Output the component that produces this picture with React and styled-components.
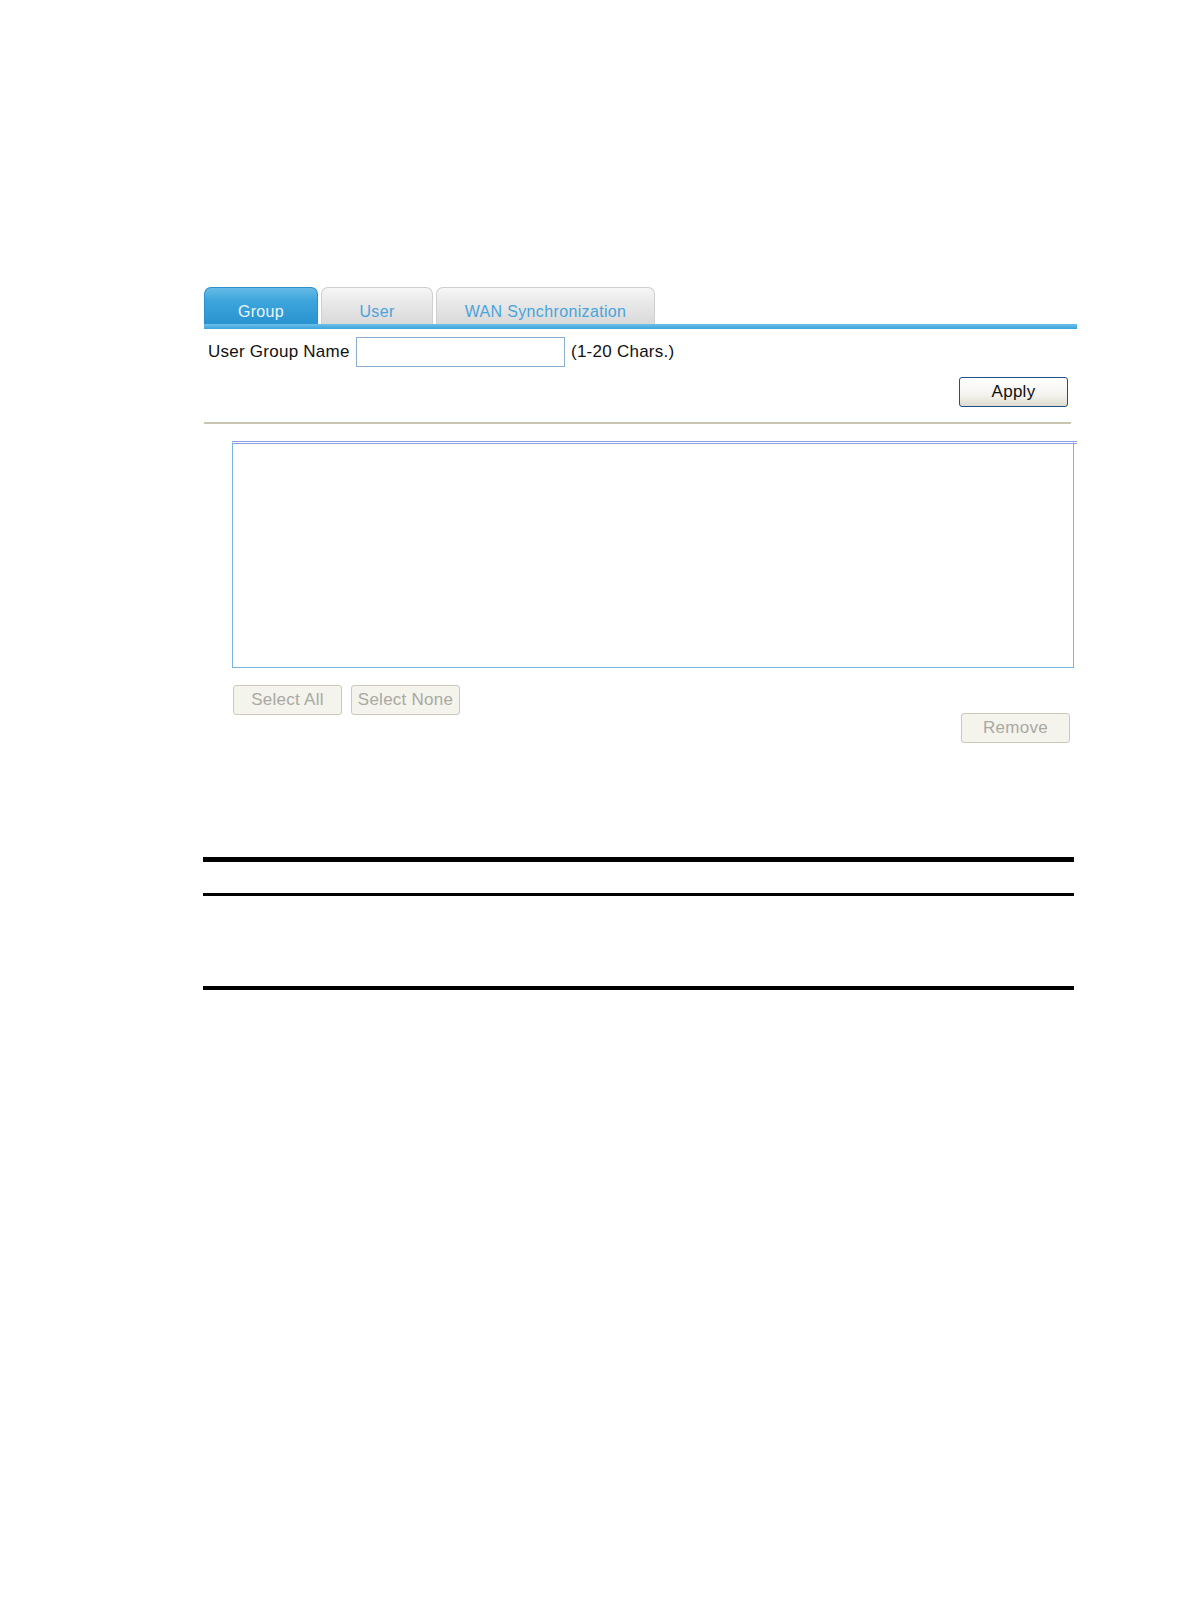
import React from 'react'
import styled, { createGlobalStyle } from 'styled-components'

const GlobalStyle = createGlobalStyle`
  html, body {
    margin: 0;
    padding: 0;
    background: #ffffff;
  }
  body {
    font-family: "Liberation Sans", Arial, sans-serif;
  }
`

const tabs = [
  { label: 'Group', width: 114, active: true },
  { label: 'User', width: 112 },
  { label: 'WAN Synchronization', width: 219 },
]

function App() {
  return (
    <Page>
      <GlobalStyle />
      <Panel>
        <TabBar>
          {tabs.map((t) => (
            <Tab key={t.label} $active={t.active} $width={t.width}>
              {t.label}
            </Tab>
          ))}
        </TabBar>
        <TabLine />

        <FormRow>
          <Label>User Group Name</Label>
          <TextInput type="text" />
          <Hint>(1-20 Chars.)</Hint>
        </FormRow>

        <ApplyRow>
          <Button>Apply</Button>
        </ApplyRow>

        <Divider />

        <ListArea>
          <ListBox />
          <ListActions>
            <Button disabled>Select All</Button>
            <Button disabled>Select None</Button>
          </ListActions>
          <RemoveRow>
            <Button disabled>Remove</Button>
          </RemoveRow>
        </ListArea>
      </Panel>

      <NoteTable>
        <Rule $size={5} />
        <HeadGap />
        <Rule $size={3} />
        <BodyGap />
        <Rule $size={4} />
      </NoteTable>
    </Page>
  )
}

export default App

const Page = styled.div`
  padding: 287px 0 0 204px;
  min-height: 1616px;
  box-sizing: border-box;
  width: 1190px;
`

const Panel = styled.div`
  width: 873px;
`

const TabBar = styled.div`
  display: flex;
  gap: 3px;
  height: 37px;
  align-items: flex-end;
`

const Tab = styled.div`
  width: ${(p) => p.$width}px;
  height: 37px;
  box-sizing: border-box;
  border-radius: 7px 7px 0 0;
  display: flex;
  align-items: center;
  justify-content: center;
  padding-top: 11px;
  font-size: 16px;
  letter-spacing: 0.35px;
  color: ${(p) => (p.$active ? '#eaf6fd' : '#4aa3dc')};
  background: ${(p) =>
    p.$active
      ? 'linear-gradient(#66bbe6 0%, #3ea5dc 35%, #2893d0 100%)'
      : 'linear-gradient(#f6f6f6 0%, #e9e9e9 40%, #d9d9d9 100%)'};
  border: 1px solid ${(p) => (p.$active ? '#2a8fca' : '#cfcfcf')};
  border-bottom: none;
`

const TabLine = styled.div`
  height: 5px;
  background: linear-gradient(#6ec0ea, #39a2db);
`

const FormRow = styled.div`
  display: flex;
  align-items: center;
  margin-top: 8px;
  padding-left: 4px;
  height: 30px;
`

const Label = styled.span`
  font-size: 17px;
  letter-spacing: 0.25px;
  color: #111;
  width: 148px;
`

const TextInput = styled.input`
  width: 209px;
  height: 30px;
  box-sizing: border-box;
  border: 1px solid #8cb0cf;
  margin: 0 6px 0 0;
  padding: 0 4px;
  outline: none;
`

const Hint = styled.span`
  font-size: 17px;
  letter-spacing: 0.25px;
  color: #111;
`

const ApplyRow = styled.div`
  display: flex;
  justify-content: flex-end;
  padding-right: 9px;
  margin-top: 10px;
`

const Button = styled.button`
  width: 109px;
  height: 30px;
  box-sizing: border-box;
  font-family: "Liberation Sans", Arial, sans-serif;
  font-size: 17px;
  letter-spacing: 0.25px;
  padding: 0;
  border-radius: 3px;
  color: #111;
  border: 1px solid #1f4f84;
  background: linear-gradient(#ffffff 0%, #f4f3ee 60%, #dedcd0 100%);
  cursor: pointer;

  &:disabled {
    color: #a9a9a3;
    border-color: #ccc9bc;
    background: #f4f3ec;
    cursor: default;
  }
`

const Divider = styled.div`
  margin-top: 15px;
  width: 867px;
  height: 2px;
  background: #c8c6b3;
`

const ListArea = styled.div`
  padding-left: 28px;
  margin-top: 17px;
`

const ListBox = styled.div`
  width: 842px;
  height: 227px;
  box-sizing: border-box;
  border: 1px solid #74b6e0;
  border-top: 3px double #8d9ee2;
  position: relative;

  &::after {
    content: '';
    position: absolute;
    top: -3px;
    right: -4px;
    width: 4px;
    height: 3px;
    border-top: 3px double #8d9ee2;
    box-sizing: border-box;
  }
`

const ListActions = styled.div`
  display: flex;
  gap: 9px;
  margin-top: 17px;
  padding-left: 1px;
`

const RemoveRow = styled.div`
  display: flex;
  justify-content: flex-end;
  padding-right: 7px;
  margin-top: -2px;
`

const NoteTable = styled.div`
  margin-top: 114px;
  width: 871px;
  margin-left: -1px;
`

const Rule = styled.div`
  height: ${(p) => p.$size}px;
  background: #000;
`

const HeadGap = styled.div`
  height: 31px;
`

const BodyGap = styled.div`
  height: 90px;
`
